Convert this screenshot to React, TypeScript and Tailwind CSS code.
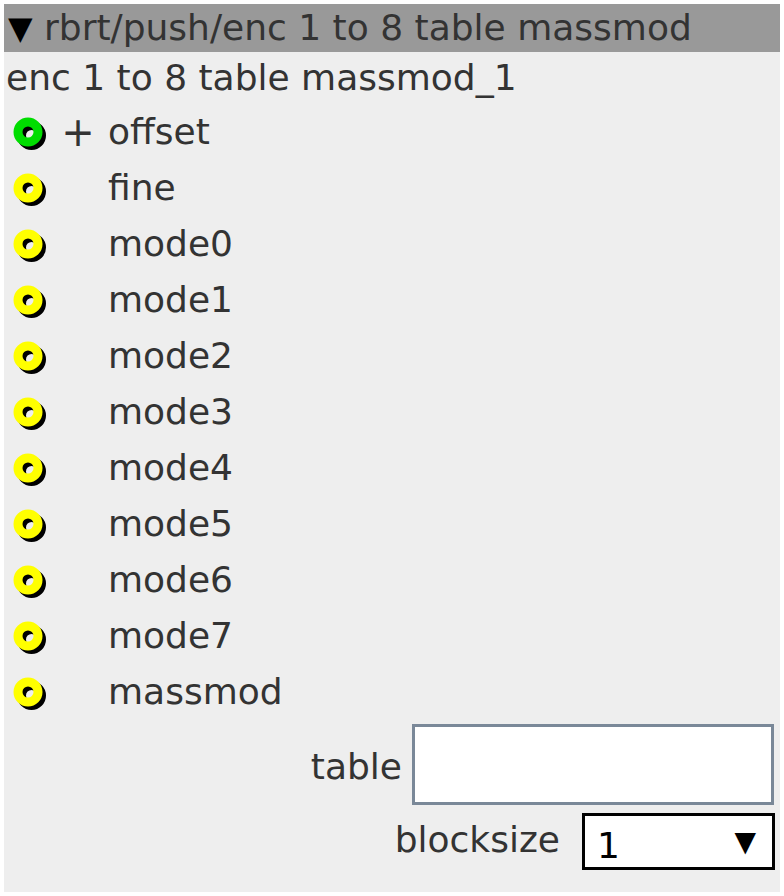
const rows = [
  { name: "offset", color: "#00dd00", plus: true },
  { name: "fine", color: "#ffff00" },
  { name: "mode0", color: "#ffff00" },
  { name: "mode1", color: "#ffff00" },
  { name: "mode2", color: "#ffff00" },
  { name: "mode3", color: "#ffff00" },
  { name: "mode4", color: "#ffff00" },
  { name: "mode5", color: "#ffff00" },
  { name: "mode6", color: "#ffff00" },
  { name: "mode7", color: "#ffff00" },
  { name: "massmod", color: "#ffff00" },
];

function Port({ color }: { color: string }) {
  return (
    <svg width="40" height="40" viewBox="0 0 40 40">
      <circle cx="23.5" cy="23.5" r="10" fill="none" stroke="#000" strokeWidth="9" />
      <circle cx="20" cy="20" r="10" fill="none" stroke={color} strokeWidth="9" />
    </svg>
  );
}

export default function App() {
  return (
    <div className="min-h-screen bg-white p-1" style={{ fontFamily: "'DejaVu Sans', sans-serif" }}>
      <div className="w-[776px] h-[888px] bg-[#eeeeee] text-[#333333] text-[36px] leading-none">
        <div className="h-12 bg-[#999999] flex items-center pl-1">
          <span className="text-black text-[32px] w-9">▼</span>
          <span>rbrt/push/enc 1 to 8 table massmod</span>
        </div>
        <div className="h-[52px] flex items-center pl-0.5">enc 1 to 8 table massmod_1</div>
        <div className="flex flex-col">
          {rows.map((r) => (
            <div key={r.name} className="h-14 flex items-center">
              <div className="w-10 ml-1 flex items-center">
                <Port color={r.color} />
              </div>
              <div className="w-[60px] flex items-center justify-center text-[40px]">
                {r.plus ? "+" : ""}
              </div>
              <span>{r.name}</span>
            </div>
          ))}
        </div>
        <div className="flex items-center justify-end mt-1 pr-1.5">
          <span className="mr-2.5 pt-1">table</span>
          <div className="w-[362px] h-[81px] bg-white border-[3px] border-[#7a8898]" />
        </div>
        <div className="flex items-center justify-end mt-2 pr-[5px]">
          <span className="mr-[22px] -mt-1">blocksize</span>
          <div className="w-[193px] h-[57px] bg-white border-[3px] border-black flex items-center justify-between pl-3 pr-4 text-black">
            <span className="pt-2">1</span>
            <span className="text-[28px]">▼</span>
          </div>
        </div>
      </div>
    </div>
  );
}
